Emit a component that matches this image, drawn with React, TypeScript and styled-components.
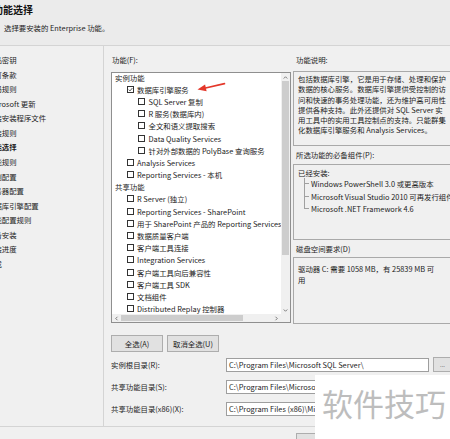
import React from 'react';
import styled, { createGlobalStyle } from 'styled-components';

const navItems = [
  '产品密钥',
  '许可条款',
  '全局规则',
  'Microsoft 更新',
  '安装安装程序文件',
  '安装规则',
  '功能选择',
  '功能规则',
  '实例配置',
  '服务器配置',
  '数据库引擎配置',
  '功能配置规则',
  '准备安装',
  '安装进度',
  '完成',
];
const currentStep = 6;

type Feature = { label: string; level: 0 | 1 | 2; checked?: boolean };

const features: Feature[] = [
  { label: '实例功能', level: 0 },
  { label: '数据库引擎服务', level: 1, checked: true },
  { label: 'SQL Server 复制', level: 2 },
  { label: 'R 服务(数据库内)', level: 2 },
  { label: '全文和语义提取搜索', level: 2 },
  { label: 'Data Quality Services', level: 2 },
  { label: '针对外部数据的 PolyBase 查询服务', level: 2 },
  { label: 'Analysis Services', level: 1 },
  { label: 'Reporting Services - 本机', level: 1 },
  { label: '共享功能', level: 0 },
  { label: 'R Server (独立)', level: 1 },
  { label: 'Reporting Services - SharePoint', level: 1 },
  { label: '用于 SharePoint 产品的 Reporting Services 外接程序', level: 1 },
  { label: '数据质量客户端', level: 1 },
  { label: '客户端工具连接', level: 1 },
  { label: 'Integration Services', level: 1 },
  { label: '客户端工具向后兼容性', level: 1 },
  { label: '客户端工具 SDK', level: 1 },
  { label: '文档组件', level: 1 },
  { label: 'Distributed Replay 控制器', level: 1 },
];

const descLines = [
  '包括数据库引擎，它是用于存储、处理和保护',
  '数据的核心服务。数据库引擎提供受控制的访',
  '问和快速的事务处理功能，还为维护高可用性',
  '提供各种支持。此外还提供对 SQL Server 实',
  '用工具中的实用工具控制点的支持。只能群集',
  '化数据库引擎服务和 Analysis Services。',
];

const prereqs = [
  'Windows PowerShell 3.0 或更高版本',
  'Microsoft Visual Studio 2010 可再发行组件',
  'Microsoft .NET Framework 4.6',
];

const paths = [
  { label: '实例根目录(R):', value: 'C:\\Program Files\\Microsoft SQL Server\\', browse: true },
  { label: '共享功能目录(S):', value: 'C:\\Program Files\\Microsoft SQL Server\\', browse: false },
  { label: '共享功能目录(x86)(X):', value: 'C:\\Program Files (x86)\\Microsoft SQL Server\\', browse: false },
];

function Chevron({ dir }: { dir: 'up' | 'down' | 'left' | 'right' }) {
  const rot = { up: 0, right: 90, down: 180, left: 270 }[dir];
  return (
    <svg width="5" height="5" viewBox="0 0 10 10">
      <path
        d="M1.5 7 L5 3.5 L8.5 7"
        fill="none"
        stroke="#606060"
        strokeWidth="1.6"
        transform={`rotate(${rot} 5 5)`}
      />
    </svg>
  );
}

function App() {
  return (
    <>
      <GlobalStyle />
      <Window>
        <Header>
          <Title>功能选择</Title>
          <Subtitle>选择要安装的 Enterprise 功能。</Subtitle>
        </Header>

        <Body>
          <Nav>
            {navItems.map((item, i) => (
              <NavItem key={item} $current={i === currentStep}>
                {item}
              </NavItem>
            ))}
          </Nav>

          <Main>
            <Panes>
              <Column>
                <Label $indent={1} $gap={7}>
                  功能(F):
                </Label>
                <ListBox>
                  <ListContent>
                    {features.map((f) => (
                      <FeatureRow key={f.label} $level={f.level}>
                        {f.level > 0 && (
                          <Check>
                            {f.checked && (
                              <svg width="5" height="5" viewBox="0 0 10 10">
                                <path d="M1.5 5.2 L4 7.8 L8.8 2" fill="none" stroke="#222" strokeWidth="1.5" />
                              </svg>
                            )}
                          </Check>
                        )}
                        {f.label}
                      </FeatureRow>
                    ))}
                  </ListContent>
                  <VScroll>
                    <ArrowCell>
                      <Chevron dir="up" />
                    </ArrowCell>
                    <VTrack>
                      <VThumb />
                    </VTrack>
                    <ArrowCell>
                      <Chevron dir="down" />
                    </ArrowCell>
                  </VScroll>
                  <HScroll>
                    <ArrowCell>
                      <Chevron dir="left" />
                    </ArrowCell>
                    <HTrack>
                      <HThumb />
                    </HTrack>
                    <ArrowCell>
                      <Chevron dir="right" />
                    </ArrowCell>
                  </HScroll>
                  <Corner />
                  <Pointer width="30" height="13" viewBox="0 0 30 13">
                    <path d="M9.5 8 L28.5 3.6" stroke="#e4372a" strokeWidth="1.6" strokeLinecap="round" />
                    <polygon points="1.5,9.6 10.6,11.2 9.1,4.6" fill="#e4372a" />
                  </Pointer>
                </ListBox>
              </Column>

              <Column>
                <Label $indent={3} $gap={6}>
                  功能说明:
                </Label>
                <InfoBox $height={75} $padTop={2}>
                  {descLines.map((line) => (
                    <DescLine key={line}>{line}</DescLine>
                  ))}
                </InfoBox>

                <Label $indent={3} $gap={4} $top={4}>
                  所选功能的必备组件(P):
                </Label>
                <InfoBox $height={76} $padTop={3}>
                  <DescLine>已经安装:</DescLine>
                  <Tree>
                    {prereqs.map((p) => (
                      <TreeItem key={p}>{p}</TreeItem>
                    ))}
                  </Tree>
                </InfoBox>

                <Label $indent={3} $gap={3} $top={4}>
                  磁盘空间要求(D)
                </Label>
                <InfoBox $height={67} $padTop={5}>
                  <DiskLine>驱动器 C: 需要 1058 MB，有 25839 MB 可</DiskLine>
                  <DiskLine>用</DiskLine>
                </InfoBox>
              </Column>
            </Panes>

            <ButtonRow>
              <Button>全选(A)</Button>
              <Button>取消全选(U)</Button>
            </ButtonRow>

            <PathGrid>
              {paths.map((p) => (
                <React.Fragment key={p.label}>
                  <PathLabel>{p.label}</PathLabel>
                  <PathInput>{p.value}</PathInput>
                  {p.browse ? <BrowseButton>...</BrowseButton> : <span />}
                </React.Fragment>
              ))}
            </PathGrid>
          </Main>
        </Body>

        <Footer>
          <Button>&lt; 上一步(B)</Button>
        </Footer>

        <Watermark>软件技巧</Watermark>
      </Window>
    </>
  );
}

const GlobalStyle = createGlobalStyle`
  html, body {
    margin: 0;
    padding: 0;
  }
  body {
    background: #f0f0f0;
    font-family: "Noto Sans CJK SC", "Noto Sans", sans-serif;
    font-size: 7.4px;
    color: #1c1c1c;
  }
`;

const Window = styled.div`
  position: relative;
  width: 450px;
  height: 439px;
  overflow: hidden;
  display: flex;
  flex-direction: column;
  background: #f0f0f0;
`;

const Header = styled.header`
  flex: none;
  height: 46px;
  box-sizing: border-box;
  padding: 3px 0 0 4px;
  background: #ebebeb;
  border-bottom: 1px solid #d4d4d4;
`;

const Title = styled.div`
  margin-left: -11px;
  font-size: 10px;
  font-weight: 700;
  line-height: 13px;
  color: #111;
`;

const Subtitle = styled.div`
  margin-top: 7px;
  line-height: 10px;
`;

const Body = styled.div`
  flex: none;
  display: flex;
  height: 381px;
  box-sizing: border-box;
  border-bottom: 1px solid #d4d4d4;
`;

const Nav = styled.nav`
  flex: none;
  width: 104px;
  box-sizing: border-box;
  padding-top: 7px;
  border-right: 1px solid #d4d4d4;
  overflow: hidden;
`;

const NavItem = styled.div<{ $current: boolean }>`
  margin-left: -13px;
  line-height: 14.57px;
  white-space: nowrap;
  font-weight: ${(p) => (p.$current ? 700 : 400)};
`;

const Main = styled.div`
  flex: 1;
  min-width: 0;
  overflow: hidden;
  padding: 9px 0 0 7px;
`;

const Panes = styled.div`
  display: grid;
  grid-template-columns: 180px 160px;
  column-gap: 2px;
`;

const Column = styled.div`
  display: flex;
  flex-direction: column;
`;

const Label = styled.div<{ $indent: number; $gap: number; $top?: number }>`
  line-height: 10px;
  padding-left: ${(p) => p.$indent}px;
  margin: ${(p) => p.$top ?? 0}px 0 ${(p) => p.$gap}px;
  white-space: nowrap;
`;

const ListBox = styled.div`
  position: relative;
  height: 251px;
  box-sizing: border-box;
  border: 1px solid #8f8f8f;
  background: #fff;
  display: grid;
  grid-template-columns: 169px 9px;
  grid-template-rows: 241px 8px;
`;

const ListContent = styled.div`
  overflow: hidden;
  margin-top: -2px;
`;

const FeatureRow = styled.div<{ $level: number }>`
  display: flex;
  align-items: center;
  gap: 3.5px;
  height: 12.2px;
  padding-left: ${(p) => 3 + p.$level * 11.5}px;
  white-space: nowrap;
`;

const Check = styled.span`
  flex: none;
  width: 7px;
  height: 7px;
  box-sizing: border-box;
  border: 1px solid #333;
  background: #fff;
  display: flex;
  align-items: center;
  justify-content: center;
`;

const VScroll = styled.div`
  display: flex;
  flex-direction: column;
  background: #f0f0f0;
`;

const ArrowCell = styled.div`
  flex: none;
  width: 9px;
  height: 8px;
  display: flex;
  align-items: center;
  justify-content: center;
`;

const VTrack = styled.div`
  flex: 1;
  padding: 0 1px;
`;

const VThumb = styled.div`
  height: 174px;
  background: #cdcdcd;
`;

const HScroll = styled.div`
  display: flex;
  background: #f0f0f0;
`;

const HTrack = styled.div`
  flex: 1;
  padding: 1px 0;
`;

const HThumb = styled.div`
  width: 122px;
  height: 100%;
  background: #cdcdcd;
`;

const Corner = styled.div`
  background: #f0f0f0;
`;

const Pointer = styled.svg`
  position: absolute;
  left: 84px;
  top: 7px;
`;

const InfoBox = styled.div<{ $height: number; $padTop: number }>`
  height: ${(p) => p.$height}px;
  box-sizing: border-box;
  padding: ${(p) => p.$padTop}px 0 0 4px;
  border: 1px solid #a9a9a9;
  background: #f0f0f0;
  overflow: hidden;
  white-space: nowrap;
`;

const DescLine = styled.div`
  line-height: 10.3px;
`;

const DiskLine = styled.div`
  line-height: 11px;
`;

const Tree = styled.div`
  margin-left: 6px;
`;

const TreeItem = styled.div`
  position: relative;
  padding-left: 7px;
  line-height: 12.4px;

  &::before {
    content: '';
    position: absolute;
    left: 0;
    top: 0;
    width: 5px;
    height: 6.2px;
    border-left: 1px solid #a0a0a0;
    border-bottom: 1px solid #a0a0a0;
    box-sizing: border-box;
  }

  &:not(:last-child)::after {
    content: '';
    position: absolute;
    left: 0;
    top: 6px;
    bottom: 0;
    border-left: 1px solid #a0a0a0;
  }
`;

const ButtonRow = styled.div`
  display: flex;
  gap: 4px;
  margin-top: 11px;
`;

const Button = styled.div`
  width: 52px;
  height: 17px;
  box-sizing: border-box;
  border: 1px solid #adadad;
  background: #e1e1e1;
  display: flex;
  align-items: center;
  justify-content: center;
  white-space: nowrap;
`;

const PathGrid = styled.div`
  display: grid;
  grid-template-columns: 111px 203px 19px;
  column-gap: 4px;
  row-gap: 8px;
  align-items: center;
  margin-top: 5px;
`;

const PathLabel = styled.div`
  line-height: 10px;
  white-space: nowrap;
`;

const PathInput = styled.div`
  height: 14px;
  box-sizing: border-box;
  border: 1px solid #9e9e9e;
  background: #fff;
  padding-left: 2px;
  line-height: 12px;
  white-space: nowrap;
  overflow: hidden;
`;

const BrowseButton = styled.div`
  height: 15px;
  box-sizing: border-box;
  border: 1px solid #adadad;
  background: #e1e1e1;
  display: flex;
  align-items: center;
  justify-content: center;
  font-size: 6px;
  color: #555;
`;

const Footer = styled.div`
  flex: 1;
  display: flex;
  padding: 6px 0 0 296px;
`;

const Watermark = styled.div`
  position: absolute;
  left: 315px;
  top: 375px;
  right: 0;
  bottom: 0;
  background: #fff;
  padding: 12px 0 0 7px;
  font-size: 31px;
  line-height: 31px;
  color: #bdbdbd;
  white-space: nowrap;
`;

export default App;
